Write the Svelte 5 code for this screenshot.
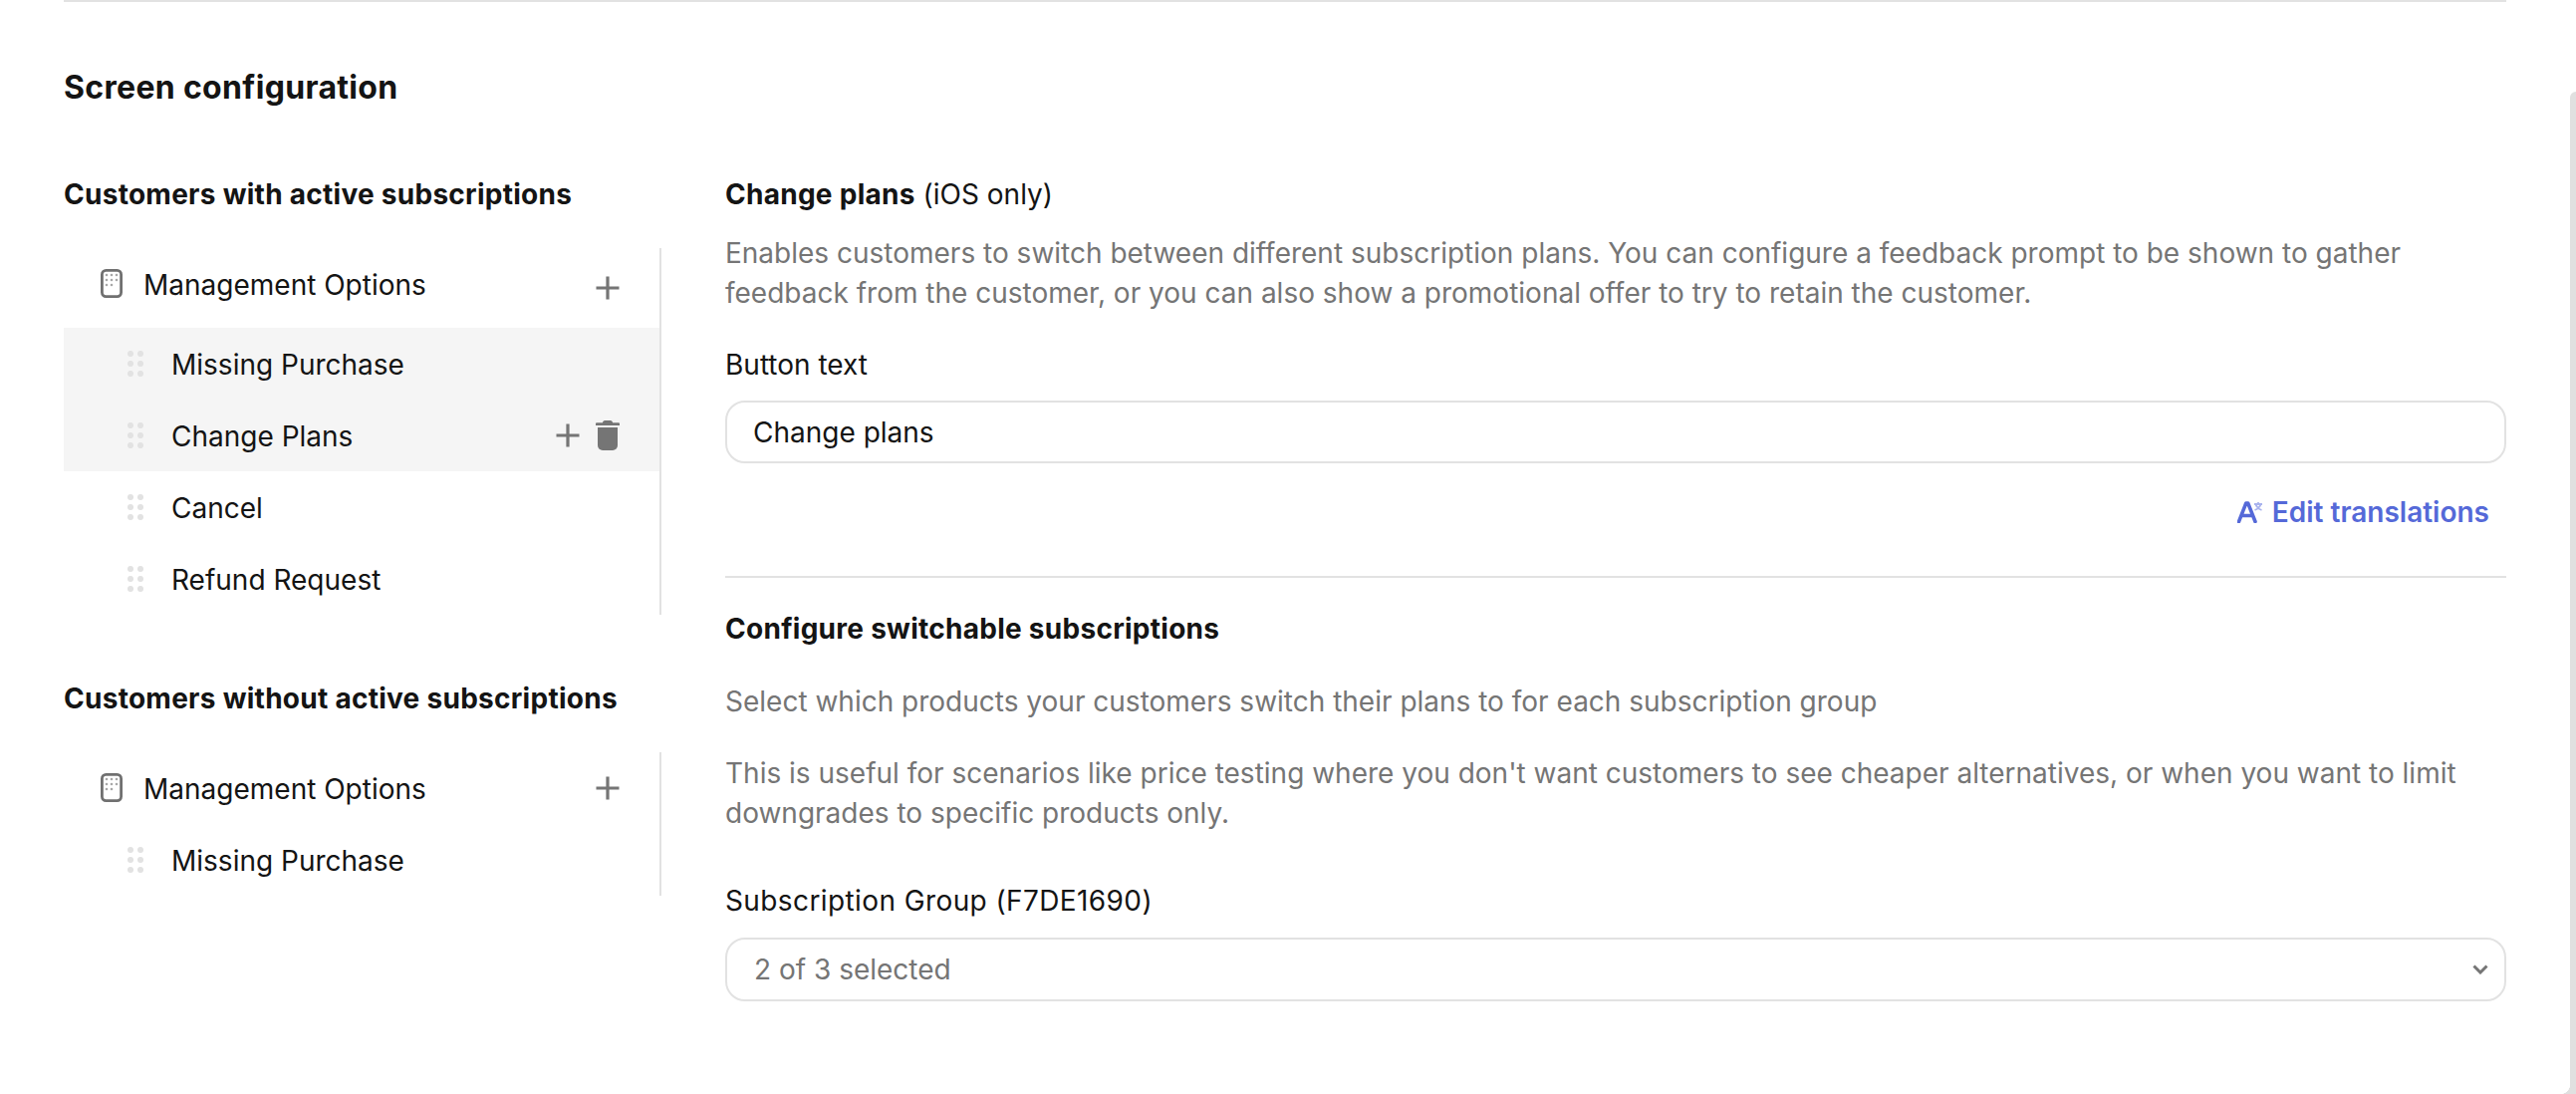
<script>
  const groups = [
    { title: 'Customers with active subscriptions', first: true, items: [
      { label: 'Missing Purchase', hl: true },
      { label: 'Change Plans', hl: true, actions: true },
      { label: 'Cancel' },
      { label: 'Refund Request' }
    ]},
    { title: 'Customers without active subscriptions', first: false, items: [
      { label: 'Missing Purchase' }
    ]}
  ];
</script>

{#snippet plus()}
  <svg class="plus" viewBox="0 0 24 24" width="24" height="24"><path d="M12 0.5V23.5M0.5 12H23.5" /></svg>
{/snippet}

<div class="page">
  <div class="rule"></div>
  <h1>Screen configuration</h1>
  <div class="columns">
    <aside class="left">
      {#each groups as g}
        <section class="group" class:first={g.first}>
          <h2>{g.title}</h2>
          <div class="tree">
            <div class="head" class:tall={g.first}>
              <span class="head-main">
                <svg class="phone" viewBox="0 0 22 29" width="22" height="29">
                  <rect x="1.4" y="1.4" width="19.2" height="26.2" rx="4" />
                  <g class="keys">
                    <circle cx="6" cy="6" r="1.3"/><circle cx="11" cy="6" r="1.3"/><circle cx="16" cy="6" r="1.3"/>
                    <circle cx="6" cy="11" r="1.3"/><circle cx="11" cy="11" r="1.3"/><circle cx="16" cy="11" r="1.3"/>
                    <circle cx="6" cy="16" r="1.3"/><circle cx="11" cy="16" r="1.3"/>
                  </g>
                </svg>
                <span class="head-label">Management Options</span>
              </span>
              {@render plus()}
            </div>
            {#each g.items as it}
              <div class="row" class:hl={it.hl}>
                <span class="grip">{#each Array(6) as _}<i></i>{/each}</span>
                <span class="label">{it.label}</span>
                {#if it.actions}
                  <span class="actions">
                    {@render plus()}
                    <svg class="trash" viewBox="0 0 24 30" width="24" height="30">
                      <path d="M7 2.2C7 1 8 0 9.2 0h5.6C16 0 17 1 17 2.2H23a1 1 0 0 1 1 1V5H0V3.2a1 1 0 0 1 1-1H7Z" />
                      <path d="M2 7H22V25a5 5 0 0 1-5 5H7a5 5 0 0 1-5-5V7Z" />
                    </svg>
                  </span>
                {/if}
              </div>
            {/each}
          </div>
        </section>
      {/each}
    </aside>

    <main class="right">
      <h2 class="title"><b>Change plans</b> (iOS only)</h2>
      <p class="muted intro">Enables customers to switch between different subscription plans. You can configure a feedback prompt to be shown to gather feedback from the customer, or you can also show a promotional offer to try to retain the customer.</p>
      <div class="field-label">Button text</div>
      <div class="control input">Change plans</div>
      <div class="translate">
        <a class="link" href="#top">
          <svg class="tr-icon" viewBox="0 0 26 22" width="26" height="22">
            <path class="a" d="M1.5 20.5 8.8 2h1.9l7.3 18.5M4.4 14.5h10.6" />
            <path class="x" d="M17 3h8M21 1v2M18.5 3c.8 3 3.5 5.2 6 6M23.5 3c-.8 3-3.5 5.2-6 6" />
          </svg>
          Edit translations
        </a>
      </div>
      <hr />
      <h2 class="sub">Configure switchable subscriptions</h2>
      <p class="muted one">Select which products your customers switch their plans to for each subscription group</p>
      <p class="muted two">This is useful for scenarios like price testing where you don't want customers to see cheaper alternatives, or when you want to limit downgrades to specific products only.</p>
      <div class="field-label group-label">Subscription Group (F7DE1690)</div>
      <div class="control select">
        <span>2 of 3 selected</span>
        <svg viewBox="0 0 16 10" width="16" height="10"><path d="M1.5 1.5 8 8l6.5-6.5" /></svg>
      </div>
    </main>
  </div>
  <div class="scrollbar"></div>
  <div class="corner"></div>
</div>

<style>
  :global(body) { margin: 0; background: #fff; }
  .page {
    position: relative;
    box-sizing: border-box;
    height: 1098px;
    overflow: hidden;
    padding: 0 70px 0 64px;
    font-family: Inter, "Liberation Sans", sans-serif;
    font-size: 28px;
    color: #141414;
    background: #fff;
  }
  .rule { height: 2px; background: #e2e2e2; }
  h1 { margin: 66px 0 0; font-size: 32px; line-height: 40px; font-weight: 700; letter-spacing: .33px; }
  h2 { margin: 0; font-size: 28px; line-height: 40px; font-weight: 700; letter-spacing: .27px; }
  .columns { display: grid; grid-template-columns: 600px 1788px; column-gap: 64px; margin-top: 67px; }
  .group.first { margin-bottom: 64px; }
  .tree { margin-top: 34px; border-right: 2px solid #e2e2e2; }
  .head { display: flex; justify-content: space-between; align-items: center; height: 72px; padding: 0 40px 0 37px; }
  .head.tall { height: 80px; }
  .head-main { display: flex; align-items: center; gap: 21px; height: 72px; align-self: flex-start; }
  .head-label { padding-top: 1px; }
  .phone { margin-top: -2px; }
  .phone rect { fill: none; stroke: #707070; stroke-width: 2.8; }
  .keys { fill: #a8a8a8; }
  .plus path { stroke: #757575; stroke-width: 3.2; fill: none; }
  .row { display: flex; align-items: center; height: 72px; padding: 0 40px 0 64px; }
  .row.hl { background: #f5f5f5; }
  .grip { display: grid; grid-template-columns: 6px 6px; gap: 4px; width: 16px; margin-right: 28px; }
  .grip i { width: 6px; height: 6px; border-radius: 50%; background: #e2e2e2; }
  .label { flex: 1; padding-top: 1px; }
  .actions { display: flex; align-items: center; gap: 16px; }
  .trash { fill: #757575; }
  .title { font-weight: 400; letter-spacing: 0; }
  .title b { font-weight: 700; letter-spacing: .27px; }
  .muted { color: #757575; margin: 0; line-height: 40px; }
  .intro { margin-top: 19px; }
  .field-label { margin-top: 32px; line-height: 40px; }
  .control {
    box-sizing: border-box;
    height: 63px;
    margin-top: 16px;
    padding: 0 26px 0 27px;
    display: flex;
    align-items: center;
    border: 2px solid #e2e2e2;
    border-radius: 20px;
  }
  .input { padding-left: 26px; }
  .translate { display: flex; justify-content: flex-end; margin-top: 29px; padding-right: 17px; }
  .link { display: flex; align-items: center; gap: 9px; color: #5569d8; font-weight: 600; line-height: 40px; text-decoration: none; }
  .tr-icon path { fill: none; }
  .tr-icon .a { stroke: #5569d8; stroke-width: 3.6; stroke-linecap: round; stroke-linejoin: round; }
  .tr-icon .x { stroke: #a9b3ee; stroke-width: 1.8; }
  hr { border: 0; height: 2px; background: #e2e2e2; margin: 44px 0 0; }
  .sub { margin-top: 31px; }
  .one { margin-top: 33px; }
  .two { margin-top: 32px; }
  .group-label { margin-top: 48px; letter-spacing: .4px; }
  .select { justify-content: space-between; color: #757575; margin-top: 17px; height: 64px; padding-right: 16px; }
  .select path { fill: none; stroke: #757575; stroke-width: 3; }
  .scrollbar { position: absolute; top: 92px; right: 0; bottom: 0; width: 6px; background: #e0e0e0; border-top-left-radius: 6px; }
  .corner { position: absolute; right: 6px; bottom: 0; width: 10px; height: 10px; background: radial-gradient(circle at 0 0, transparent 10px, #e0e0e0 10.5px); }
</style>
